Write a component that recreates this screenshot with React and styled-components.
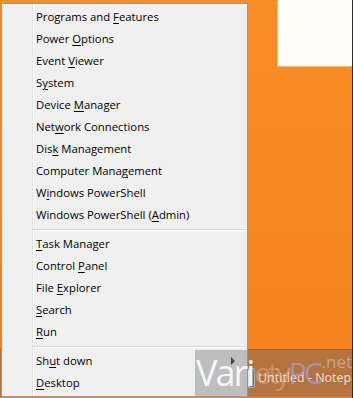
import styled, { createGlobalStyle } from "styled-components";

const GlobalStyle = createGlobalStyle`
  html, body {
    margin: 0;
    padding: 0;
  }
  body {
    width: 353px;
    height: 398px;
    overflow: hidden;
    font-family: "Segoe UI", "Open Sans", "Noto Sans", sans-serif;
  }
`;

const Desktop = styled.div`
  position: relative;
  width: 353px;
  height: 398px;
  display: flex;
  flex-direction: column;
  justify-content: flex-end;
  background: linear-gradient(to bottom, #f98d25, #f6831d);
  box-sizing: border-box;
  border-right: 1px solid #2a2a2a;
  overflow: hidden;
`;

const Window = styled.div`
  position: absolute;
  top: 0;
  left: 278px;
  width: 74px;
  height: 66px;
  background: #fffefb;
  box-shadow: -1px 1px 0 #e9c08a;
`;

const Taskbar = styled.div`
  height: 47px;
  margin-bottom: 1px;
  display: flex;
  align-items: center;
  background: #b4733f;
  border-top: 1px solid #a45f30;
`;

const TaskButton = styled.div`
  display: flex;
  align-items: center;
  gap: 2px;
  margin-left: 240px;
  margin-top: 8px;
  white-space: nowrap;
  font-size: 12.5px;
  color: rgba(255, 255, 255, 0.78);
`;

const Menu = styled.div`
  position: absolute;
  top: 3px;
  left: 1px;
  z-index: 2;
  width: 247px;
  height: 394px;
  box-sizing: border-box;
  padding: 2px 0;
  border: 1px solid #8e9aa8;
  background:
    linear-gradient(
      to right,
      transparent 30px,
      #e2e3e3 30px,
      #e2e3e3 31px,
      #ffffff 31px,
      #ffffff 32px,
      transparent 32px
    ),
    #f0f0f0;
`;

const Item = styled.div`
  display: flex;
  align-items: center;
  justify-content: space-between;
  box-sizing: border-box;
  height: 22px;
  padding: 0 12px 1px 34px;
  font-size: 11.3px;
  color: #000;
  white-space: nowrap;
`;

const Key = styled.span`
  text-decoration: underline;
  text-underline-offset: 2px;
`;

const Separator = styled.div`
  height: 7px;
  margin: 0 1px 0 30px;
  background: linear-gradient(
    to bottom,
    transparent 3px,
    #d7d7d7 3px,
    #d7d7d7 4px,
    #ffffff 4px,
    #ffffff 5px,
    transparent 5px
  );
`;

const Arrow = styled.span`
  width: 0;
  height: 0;
  margin-top: 1px;
  border-top: 4px solid transparent;
  border-bottom: 4px solid transparent;
  border-left: 4px solid #000;
`;

const Watermark = styled.div`
  position: absolute;
  left: 195px;
  top: 350px;
  z-index: 3;
  width: 158px;
  height: 46px;
  display: flex;
  align-items: center;
  font-family: "Open Sans", "Noto Sans", sans-serif;
  pointer-events: none;
`;

const MarkBox = styled.div`
  position: absolute;
  left: 0;
  top: 0;
  width: 53px;
  height: 46px;
  background: rgba(140, 140, 140, 0.5);
`;

const MarkWord = styled.span`
  position: relative;
  font-size: ${(p) => p.$size || "36px"};
  letter-spacing: ${(p) => p.$tight || "-2px"};
  line-height: 1;
  margin-left: 1px;
  color: ${(p) => p.$color};
`;

const MarkNet = styled.span`
  position: absolute;
  top: 3px;
  right: 1px;
  font-size: 17px;
  line-height: 1;
  color: rgba(255, 255, 255, 0.35);
`;

function NotepadIcon() {
  return (
    <svg width="16" height="22" viewBox="0 0 16 22">
      <rect x="1" y="1" width="14" height="20" rx="2" fill="#9fb4c2" />
      <rect x="3" y="3" width="10" height="16" fill="#dfe8ee" />
      <rect x="10" y="2" width="4" height="18" rx="1" fill="#5d7a8c" />
    </svg>
  );
}

const groups = [
  [
    ["Programs and ", "F", "eatures"],
    ["Power ", "O", "ptions"],
    ["Event ", "V", "iewer"],
    ["S", "y", "stem"],
    ["Device ", "M", "anager"],
    ["Net", "w", "ork Connections"],
    ["Dis", "k", " Management"],
    ["Computer Mana", "g", "ement"],
    ["W", "i", "ndows PowerShell"],
    ["Windows PowerShell (", "A", "dmin)"],
  ],
  [
    ["", "T", "ask Manager"],
    ["Control ", "P", "anel"],
    ["File ", "E", "xplorer"],
    ["", "S", "earch"],
    ["", "R", "un"],
  ],
  [
    ["Sh", "u", "t down", true],
    ["", "D", "esktop"],
  ],
];

function MenuItem({ item }) {
  const [before, key, after, submenu] = item;
  return (
    <Item>
      <span>
        {before}
        <Key>{key}</Key>
        {after}
      </span>
      {submenu && <Arrow />}
    </Item>
  );
}

export default function App() {
  return (
    <>
      <GlobalStyle />
      <Desktop>
        <Window />
        <Taskbar>
          <TaskButton>
            <NotepadIcon />
            <span>Untitled - Notepad</span>
          </TaskButton>
        </Taskbar>
        <Menu>
          {groups.map((group, i) => (
            <div key={i}>
              {i > 0 && <Separator />}
              {group.map((item) => (
                <MenuItem key={item.join("")} item={item} />
              ))}
            </div>
          ))}
        </Menu>
        <Watermark>
          <MarkBox />
          <MarkWord $color="#f4f6fb">Vari</MarkWord>
          <MarkWord $color="rgba(255,225,200,0.3)" $size="30px" $tight="-3px">
            ety
          </MarkWord>
          <MarkWord $color="rgba(160,170,235,0.6)" $size="30px" $tight="-3px">
            PC
          </MarkWord>
          <MarkNet>.net</MarkNet>
        </Watermark>
      </Desktop>
    </>
  );
}
